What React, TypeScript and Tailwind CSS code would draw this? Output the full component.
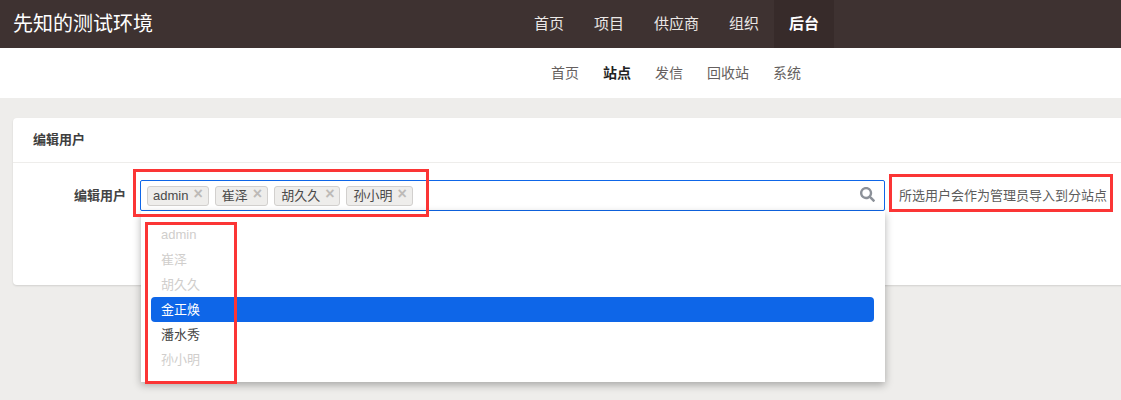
import React from 'react';
import { FaSearch } from 'react-icons/fa';

const fontStack = '[font-family:"Liberation_Sans","Noto_Sans_CJK_SC",sans-serif]';

const mainNav = [
  { label: '首页' },
  { label: '项目' },
  { label: '供应商' },
  { label: '组织' },
  { label: '后台', active: true },
];

const subNav = [
  { label: '首页' },
  { label: '站点', active: true },
  { label: '发信' },
  { label: '回收站' },
  { label: '系统' },
];

const tags = ['admin', '崔泽', '胡久久', '孙小明'];

const options = [
  { label: 'admin', disabled: true },
  { label: '崔泽', disabled: true },
  { label: '胡久久', disabled: true },
  { label: '金正焕', highlight: true },
  { label: '潘水秀' },
  { label: '孙小明', disabled: true },
];

export default function App() {
  return (
    <div className={`relative w-[1121px] h-[400px] overflow-hidden bg-[#eeedeb] text-[#3e3e3e] ${fontStack}`}>
      {/* Top bar */}
      <header className="flex h-12 items-center bg-[#3e3231] pl-[13px]">
        <div className="w-[506px] text-[20px] text-white">先知的测试环境</div>
        <nav className="flex h-full">
          {mainNav.map((item) => (
            <a
              key={item.label}
              className={`flex h-full items-center px-[15px] text-[15px] ${
                item.active ? 'bg-[#372b2a] font-bold text-white' : 'text-[#ebe8e6]'
              }`}
            >
              {item.label}
            </a>
          ))}
        </nav>
      </header>

      {/* Sub nav */}
      <nav className="flex h-[50px] items-center gap-6 bg-white pl-[551px] text-[14px] text-[#655f5e]">
        {subNav.map((item) => (
          <a key={item.label} className={item.active ? 'font-bold text-[#222]' : ''}>
            {item.label}
          </a>
        ))}
      </nav>

      {/* Card */}
      <section className="mt-5 ml-[13px] mr-[-8px] h-[167px] rounded bg-white shadow-[0_1px_2px_rgba(0,0,0,0.12)]">
        <div className="flex h-[45px] items-center border-b border-[#eeedeb] pl-5 text-[13px] font-bold text-[#3e3e3e]">
          编辑用户
        </div>
        <div className="flex pt-[17px]">
          <label className="flex h-[31px] w-[113px] items-center justify-end text-[13px] font-bold text-[#444]">
            编辑用户
          </label>
          <div className="relative ml-[14px] w-[745px]">
            <div className="flex h-[31px] items-center gap-[6px] rounded-[2px] border border-[#0e66e8] bg-white pl-[6px]">
              {tags.map((tag) => (
                <span
                  key={tag}
                  className="flex h-5 items-center gap-[5px] rounded-[3px] border border-[#d2d0ce] bg-[#eeedeb] pl-[6px] first:pl-[5px] pr-[5px] text-[13px] leading-none text-[#4a4a4a]"
                >
                  {tag}
                  <span className="relative -top-[2px] text-[16px] font-bold leading-none text-[#bdbab7]">×</span>
                </span>
              ))}
              <FaSearch className="absolute right-[10px] top-[7px] text-[15px] text-[#8c9199]" />
            </div>
            <ul className="absolute left-[1px] right-0 top-[31px] z-10 h-[171px] bg-white pl-[10px] pr-[11px] pt-[11px] text-[13px] shadow-[0_3px_8px_rgba(0,0,0,0.3)]">
              {options.map((opt) => (
                <li
                  key={opt.label}
                  className={`flex h-[25px] items-center rounded-[4px] pl-[10px] ${
                    opt.highlight
                      ? 'bg-[#0e66e8] text-white'
                      : opt.disabled
                        ? 'text-[#d0cecc]'
                        : 'text-[#444]'
                  }`}
                >
                  {opt.label}
                </li>
              ))}
            </ul>
          </div>
          <p className="ml-[14px] flex h-[31px] items-center whitespace-nowrap text-[13px] text-[#5c5c5c]">
            所选用户会作为管理员导入到分站点
          </p>
        </div>
      </section>

      {/* Red annotation frames */}
      <div className="absolute left-[133px] top-[169px] z-20 h-[48px] w-[296px] border-[3px] border-[#fb3535]" />
      <div className="absolute left-[145px] top-[222px] z-20 h-[162px] w-[92px] border-[3px] border-[#fb3535]" />
      <div className="absolute left-[889px] top-[174px] z-20 h-[38px] w-[224px] border-[3px] border-[#fb3535]" />
    </div>
  );
}
